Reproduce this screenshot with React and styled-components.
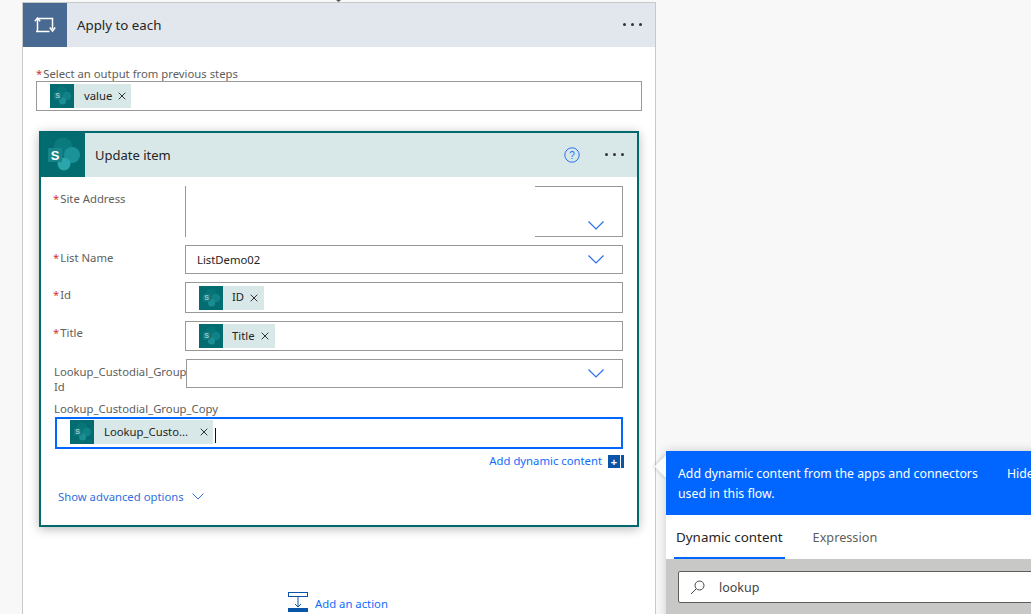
import React from "react";
import styled, { createGlobalStyle } from "styled-components";

const FONT = `"Noto Sans", "Open Sans", "Liberation Sans", sans-serif`;
const Global = createGlobalStyle`
  html, body { margin: 0; padding: 0; background: #f8f8f8; overflow: hidden; }
  * { box-sizing: border-box; }
`;
const Page = styled.div`
  position: relative; width: 1031px; height: 614px; overflow: hidden;
  background: #f8f8f8; font-family: ${FONT}; color: #252423; padding: 2px 0 0 22px;
`;
const ConnectorTip = styled.div`
  position: absolute; left: 336px; top: 0; width: 5px; height: 2px; background: #555;
  clip-path: polygon(0 0, 100% 0, 50% 100%);
`;
const Outer = styled.section`
  width: 634px; height: 640px; background: #fff; border: 1px solid #c8c8c8; border-bottom: 0;
`;
const OuterHead = styled.header`
  height: 44px; display: flex; align-items: center; background: #e2e6ed;
`;
const LoopBox = styled.div`
  width: 44px; height: 44px; background: #486991; display: flex; align-items: center; justify-content: center;
`;
const HeadTitle = styled.div`
  font-size: ${p => p.$size}px; margin-left: ${p => p.$ml}px; flex: 1; color: #252423;
`;
const Dots = styled.div`
  display: flex; gap: 5px; margin-right: ${p => p.$mr}px; margin-top: -1px;
  i { width: 3px; height: 3px; border-radius: 50%; background: #333; display: block; }
`;
const OuterBody = styled.div`
  padding: 20px 13px 0 13px;
`;
const Label = styled.label`
  display: block; font-size: 11.3px; line-height: ${p => p.$lh || 14}px; color: #605e5c;
  padding-top: ${p => p.$pt || 0}px; padding-left: ${p => p.$pl || 0}px;
  b { color: #d13438; font-weight: 400; margin-right: 1px; }
`;
const TokenField = styled.div`
  display: flex; align-items: center; height: ${p => p.$h}px; border: 1px solid #999; background: #fff; padding-left: 13px;
`;
const Token = styled.span`
  display: inline-flex; align-items: center; height: 24px; background: #d8e8e8; font-size: 11.3px; color: #252423; white-space: nowrap;
`;
const TokenText = styled.span`
  margin-left: ${p => p.$ml}px; padding-bottom: 2px;
`;
const TokenX = styled.span`
  display: inline-flex; margin-left: ${p => p.$ml}px; margin-right: ${p => p.$mr}px;
`;
const Card = styled.article`
  width: 600px; height: 396px; margin: 20px 0 0 3px; border: 2px solid #00696e; background: #fff;
  box-shadow: 0 2px 10px rgba(0,0,0,.28);
`;
const CardHead = styled.header`
  height: 44px; display: flex; align-items: center; background: #d8e8e8;
`;
const HelpIcon = styled.svg`
  margin-right: 25px; margin-top: -1px;
`;
const CardBody = styled.div`
  padding: 9px 14px 0 12px;
`;
const Row = styled.div`
  display: grid; grid-template-columns: 132px 1fr; margin-bottom: ${p => p.$mb}px; height: ${p => p.$h}px;
`;
const Field = styled.div`
  position: relative; display: flex; align-items: center; height: ${p => p.$h}px; margin-left: ${p => p.$ml || 0}px;
  border: 1px solid #999; background: #fff; padding-left: ${p => p.$pl ?? 11}px; font-size: 11.3px; color: #252423;
`;
const Redaction = styled.div`
  position: absolute; left: 0; top: -1px; bottom: -1px; width: 349px; background: #fff;
`;
const Chevron = styled.svg`
  position: absolute; right: 18px; bottom: ${p => p.$b}px;
`;
const FullLabel = styled(Label)`
  height: 15px;
`;
const FocusField = styled.div`
  display: flex; align-items: flex-start; height: 32px; margin: 0 0 0 2px; width: 568px;
  border: 2px solid #0066ff; background: #fff; padding: 1px 0 0 13px;
`;
const Caret = styled.span`
  width: 1px; height: 15px; background: #111; margin: 8px 0 0 2px;
`;
const DynamicRow = styled.div`
  display: flex; align-items: center; justify-content: flex-end; height: 14px; margin: 5px -1px 0 0; font-size: 11.3px; color: #0f6cfd;
`;
const DynamicText = styled.span`
  padding-bottom: 1px;
`;
const PlusBox = styled.span`
  width: 12px; height: 13px; margin-left: 6px; background: #0a55a8; color: #fff; font: 700 11px/13px ${FONT}; text-align: center;
`;
const PlusBar = styled.span`
  width: 3px; height: 13px; margin-left: 1px; background: #0a55a8;
`;
const Advanced = styled.div`
  display: flex; align-items: center; gap: 8px; margin: 20px 0 0 5px; font-size: 11.3px; color: #2f6fe0; height: 16px;
`;
const AddAction = styled.div`
  display: flex; align-items: flex-start; margin: 65px 0 0 252px; font-size: 11.3px; color: #0f6cfd;
  span { margin: 3px 0 0 7px; line-height: 18px; }
`;
const Panel = styled.aside`
  position: absolute; left: 666px; top: 451px; width: 420px; height: 200px; background: #c8c8c6;
  box-shadow: 0 0 10px rgba(0,0,0,.18);
  &::before {
    content: ""; position: absolute; left: -8.5px; top: 6.5px; width: 17px; height: 17px; background: #fbfbfb;
    transform: rotate(45deg); box-shadow: -1px 1px 4px rgba(0,0,0,.14);
  }
`;
const PanelHead = styled.div`
  position: relative; height: 64px; background: #0066ff; color: #fff; display: flex; padding: 13px 0 0 12px;
  font-size: 12.3px; line-height: 20px;
`;
const PanelText = styled.div`
  width: 329px; padding-right: 14px;
`;
const Tabs = styled.div`
  position: relative; height: 44px; background: #fff; display: flex; padding-left: 8px;
`;
const Tab = styled.div`
  height: 44px; padding: 13px 2px 0; margin-right: 26px; color: ${p => p.$on ? "#252423" : "#605e5c"};
  font-size: ${p => p.$on ? 13.4 : 12.7}px;
  border-bottom: ${p => p.$on ? "2px solid #0066ff" : "0"};
`;
const SearchWrap = styled.div`
  padding: 12px;
`;
const Search = styled.div`
  display: flex; align-items: center; height: 32px; background: #fff; border: 1px solid #605e5c; border-radius: 2px;
  padding-left: 11px; font-size: 12.5px; color: #444;
  span { margin-left: 14px; }
`;

const SharePoint = ({ size, dim }) => (
  <svg width={size} height={size} viewBox="0 0 44 44" style={{ display: "block", flex: "none" }}>
    <rect width="44" height="44" fill="#036c70" />
    <g opacity={dim ? 0.6 : 1}>
      <circle cx="22" cy="14" r="9.5" fill="#0a7a7e" />
      <circle cx="31" cy="22" r="8" fill="#1a9297" />
      <circle cx="23" cy="31" r="6.5" fill="#2aa5ab" />
      <rect x="7" y="15" width="14" height="14" rx="1" fill="#17858a" />
      <text x="14" y="26.5" textAnchor="middle" fontFamily="Liberation Sans, sans-serif" fontWeight="700" fontSize="13" fill="#fff">S</text>
    </g>
  </svg>
);
const X = () => (
  <svg width="8" height="8" viewBox="0 0 8 8"><path d="M.7.7l6.6 6.6M7.3.7L.7 7.3" stroke="#333" strokeWidth="1" fill="none" /></svg>
);
const Down = ({ w = 16, color = "#2a6ff0", b }) => (
  <Chevron $b={b} width={w} height="9" viewBox="0 0 16 9"><path d="M.5.5L8 8 15.5.5" fill="none" stroke={color} strokeWidth="1.2" /></Chevron>
);
const DotsIcon = ({ mr }) => <Dots $mr={mr}><i /><i /><i /></Dots>;
const Req = ({ children }) => <><b>*</b>{children}</>;

export default function App() {
  return (
    <Page>
      <Global />
      <ConnectorTip />
      <Outer>
        <OuterHead>
          <LoopBox>
            <svg width="22" height="16" viewBox="0 0 22 16" fill="none" stroke="#fff" strokeWidth="1.5">
              <path d="M3.5 14.5V1.5H18.5V12" />
              <path d="M.8 4.2L3.5 1.2 6.2 4.2" />
              <path d="M2 14.5H15.5" />
              <path d="M15.8 10.5L18.5 14 21.2 10.5" />
            </svg>
          </LoopBox>
          <HeadTitle $ml={10} $size={13.3}>Apply to each</HeadTitle>
          <DotsIcon mr={13} />
        </OuterHead>
        <OuterBody>
          <Label><Req>Select an output from previous steps</Req></Label>
          <TokenField $h={30}>
            <Token>
              <SharePoint size={24} dim />
              <TokenText $ml={10}>value</TokenText>
              <TokenX $ml={6} $mr={5}><X /></TokenX>
            </Token>
          </TokenField>
          <Card>
            <CardHead>
              <SharePoint size={44} />
              <HeadTitle $ml={10} $size={13}>Update item</HeadTitle>
              <HelpIcon width="16" height="16" viewBox="0 0 16 16">
                <circle cx="8" cy="8" r="7.2" fill="none" stroke="#2a6ff0" strokeWidth="1" />
                <text x="8" y="11.5" textAnchor="middle" fontSize="10" fontFamily="Liberation Sans, sans-serif" fill="#2a6ff0">?</text>
              </HelpIcon>
              <DotsIcon mr={13} />
            </CardHead>
            <CardBody>
              <Row $h={51} $mb={8}>
                <Label $pt={6}><Req>Site Address</Req></Label>
                <Field $h={51}>
                  <Redaction />
                  <Down b={6} />
                </Field>
              </Row>
              <Row $h={29} $mb={8}>
                <Label $pt={6}><Req>List Name</Req></Label>
                <Field $h={29}>ListDemo02<Down b={9} /></Field>
              </Row>
              <Row $h={31} $mb={8}>
                <Label $pt={6}><Req>Id</Req></Label>
                <Field $h={31} $pl={13}>
                  <Token>
                    <SharePoint size={24} dim />
                    <TokenText $ml={9}>ID</TokenText>
                    <TokenX $ml={6} $mr={6}><X /></TokenX>
                  </Token>
                </Field>
              </Row>
              <Row $h={30} $mb={8}>
                <Label $pt={5}><Req>Title</Req></Label>
                <Field $h={30} $pl={13}>
                  <Token>
                    <SharePoint size={24} dim />
                    <TokenText $ml={9}>Title</TokenText>
                    <TokenX $ml={6} $mr={6}><X /></TokenX>
                  </Token>
                </Field>
              </Row>
              <Row $h={29} $mb={14}>
                <Label $pt={5} $lh={15} $pl={1}>Lookup_Custodial_Group<br />Id</Label>
                <Field $h={29} $ml={1}><Down b={9} /></Field>
              </Row>
              <FullLabel $pl={1}>Lookup_Custodial_Group_Copy</FullLabel>
              <FocusField>
                <Token>
                  <SharePoint size={24} dim />
                  <TokenText $ml={10}>Lookup_Custo...</TokenText>
                  <TokenX $ml={12} $mr={5}><X /></TokenX>
                </Token>
                <Caret />
              </FocusField>
              <DynamicRow><DynamicText>Add dynamic content</DynamicText><PlusBox>+</PlusBox><PlusBar /></DynamicRow>
              <Advanced>
                Show advanced options
                <svg width="12" height="7" viewBox="0 0 12 7"><path d="M.5.5L6 6 11.5.5" fill="none" stroke="#2f6fe0" strokeWidth="1" /></svg>
              </Advanced>
            </CardBody>
          </Card>
          <AddAction>
            <svg width="20" height="21" viewBox="0 0 20 21" fill="none" style={{ flex: "none" }}>
              <rect x=".5" y=".5" width="19" height="4" stroke="#0a55a8" />
              <path d="M10 5v10M7 12l3 3 3-3" stroke="#0a55a8" />
              <rect y="16" width="20" height="4" fill="#0a55a8" />
            </svg>
            <span>Add an action</span>
          </AddAction>
        </OuterBody>
      </Outer>
      <Panel>
        <PanelHead>
          <PanelText>Add dynamic content from the apps and connectors used in this flow.</PanelText>
          <span>Hide</span>
        </PanelHead>
        <Tabs>
          <Tab $on>Dynamic content</Tab>
          <Tab>Expression</Tab>
        </Tabs>
        <SearchWrap>
          <Search>
            <svg width="15" height="15" viewBox="0 0 15 15" fill="none" stroke="#444" strokeWidth="1">
              <circle cx="9.5" cy="5.5" r="4.5" />
              <path d="M6 9L1 14" />
            </svg>
            <span>lookup</span>
          </Search>
        </SearchWrap>
      </Panel>
    </Page>
  );
}
